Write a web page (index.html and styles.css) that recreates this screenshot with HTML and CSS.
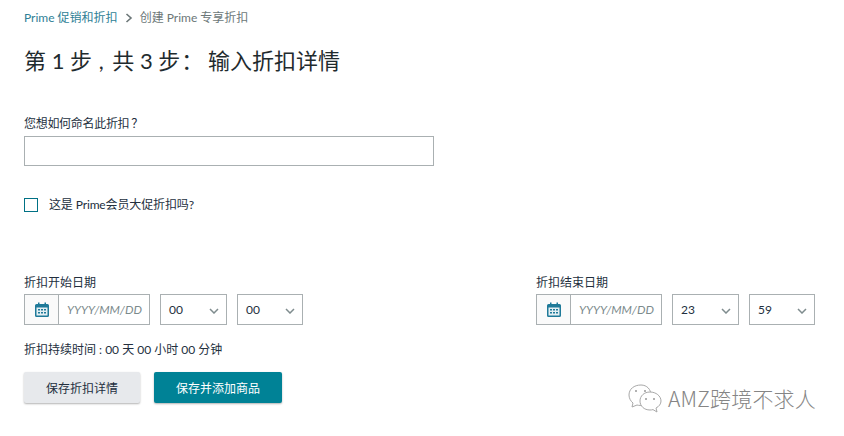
FILE: index.html
```html
<!DOCTYPE html>
<html lang="zh-CN">
<head>
<meta charset="utf-8">
<title>创建 Prime 专享折扣</title>
<link rel="stylesheet" href="styles.css">
</head>
<body>
<main class="page">
  <nav class="crumbs">
    <a class="crumb-link">Prime 促销和折扣</a>
    <svg class="crumb-sep" width="8" height="10" viewBox="0 0 8 10"><path d="M1.500 1l4.500 4-4.500 4" fill="none" stroke="#6c7778" stroke-width="1.600"/></svg>
    <span class="crumb-current">创建 Prime 专享折扣</span>
  </nav>
  <h1 class="title">第 1 步 <span class="comma">,</span> 共 3 步<span class="punct">：</span> 输入折扣详情</h1>
  <label class="label name-label">您想如何命名此折扣<span class="question">？</span></label>
  <input class="name-input" type="text">
  <div class="check-row">
    <span class="checkbox"></span>
    <span class="check-text">这是 Prime会员大促折扣吗?</span>
  </div>
  <div class="dates">
    <section class="date-group">
      <div class="label">折扣开始日期</div>
      <div class="date-fields">
        <div class="date-input">
          <span class="cal"><svg width="14" height="15" viewBox="0 0 14 15"><path d="M1.500 2H3V.5h1.500V2h5V.5H11V2h1.500A1.500 1.500 0 0 1 14 3.500v10a1.500 1.500 0 0 1-1.500 1.500h-11A1.500 1.500 0 0 1 0 13.500v-10A1.500 1.500 0 0 1 1.500 2z" fill="#1f7a99"/><path d="M1.500 5.500h11v8h-11z" fill="#e4eff3"/><path d="M3 7h2v1.500H3zM6 7h2v1.500H6zM9 7h2v1.500H9zM3 10h2v1.500H3zM6 10h2v1.500H6zM9 10h2v1.500H9z" fill="#1f7a99"/></svg></span>
          <span class="placeholder">YYYY/MM/DD</span>
        </div>
        <div class="select s1"><span>00</span><svg width="10" height="6" viewBox="0 0 10 6"><path d="M1 1l4 4 4-4" fill="none" stroke="#7f8c8e" stroke-width="1.500"/></svg></div>
        <div class="select s2"><span>00</span><svg width="10" height="6" viewBox="0 0 10 6"><path d="M1 1l4 4 4-4" fill="none" stroke="#7f8c8e" stroke-width="1.500"/></svg></div>
      </div>
    </section>
    <section class="date-group date-group-end">
      <div class="label">折扣结束日期</div>
      <div class="date-fields">
        <div class="date-input">
          <span class="cal"><svg width="14" height="15" viewBox="0 0 14 15"><path d="M1.500 2H3V.5h1.500V2h5V.5H11V2h1.500A1.500 1.500 0 0 1 14 3.500v10a1.500 1.500 0 0 1-1.500 1.500h-11A1.500 1.500 0 0 1 0 13.500v-10A1.500 1.500 0 0 1 1.500 2z" fill="#1f7a99"/><path d="M1.500 5.500h11v8h-11z" fill="#e4eff3"/><path d="M3 7h2v1.500H3zM6 7h2v1.500H6zM9 7h2v1.500H9zM3 10h2v1.500H3zM6 10h2v1.500H6zM9 10h2v1.500H9z" fill="#1f7a99"/></svg></span>
          <span class="placeholder">YYYY/MM/DD</span>
        </div>
        <div class="select s1"><span>23</span><svg width="10" height="6" viewBox="0 0 10 6"><path d="M1 1l4 4 4-4" fill="none" stroke="#7f8c8e" stroke-width="1.500"/></svg></div>
        <div class="select s2"><span>59</span><svg width="10" height="6" viewBox="0 0 10 6"><path d="M1 1l4 4 4-4" fill="none" stroke="#7f8c8e" stroke-width="1.500"/></svg></div>
      </div>
    </section>
  </div>
  <p class="duration">折扣持续时间 : 00 天 00 小时 00 分钟</p>
  <div class="actions">
    <button class="btn btn-secondary">保存折扣详情</button>
    <button class="btn btn-primary">保存并添加商品</button>
  </div>
  <div class="watermark">
    <svg width="36" height="30" viewBox="0 0 36 30"><g fill="#fff" stroke="#a8a8a8" stroke-width="1"><path d="M14 2C7 2 2 6 2 12c0 3 1.500 6 4 8l-1 4 5-2c1 .3 2 .4 3 .4 6 0 11-5 11-10.400S20 2 14 2z"/><path d="M23 9c-6 0-10 4-10 9s4 9 10 9c1 0 2-.1 3-.4l4 2.400-1-4c3-1.500 5-4 5-7 0-5-5-9-11-9z"/></g><g fill="#999"><circle cx="9" cy="8" r="1"/><circle cx="18" cy="8" r="1"/><circle cx="19" cy="16" r="1"/><circle cx="27" cy="16" r="1"/></g></svg>
    <span>AMZ跨境不求人</span>
  </div>
</main>
</body>
</html>
```
FILE: styles.css
```css
* { box-sizing: border-box; }
html, body { margin: 0; padding: 0; background: #fff; }
body {
  width: 844px;
  height: 436px;
  overflow: hidden;
  font-family: "Lato", "Noto Sans CJK SC", sans-serif;
  font-size: 12px;
  color: #232f3e;
}
.page { position: relative; height: 436px; padding: 10px 24px 0; }
.crumbs { display: flex; align-items: center; height: 16px; line-height: 16px; gap: 7px; }
.crumb-link { color: #2f7f96; }
.crumb-current { color: #6c7778; }
.title { margin: 18px 0 0; height: 33px; font-size: 22px; line-height: 30px; font-weight: 400; color: #1f2b2e; white-space: nowrap; }
.comma { margin: 0 3px 0 1px; }
.punct { font-family: "Noto Sans CJK TC", sans-serif; margin: 0 -1px 0 1px; }
.question { font-family: "Noto Sans CJK TC", sans-serif; margin-left: 2px; }
.label { display: block; line-height: 18px; height: 16px; color: #232f3e; }
.name-label { margin-top: 39px; letter-spacing: -.3px; line-height: 14px; }
.name-input { display: block; margin: 4px 0 0; width: 410px; height: 30px; border: 1px solid #aab0b2; background: #fff; outline: 0; padding: 0 8px; }
.check-row { display: flex; align-items: center; margin-top: 32px; height: 14px; gap: 11px; }
.checkbox { width: 14px; height: 14px; border: 1px solid #007185; background: #fff; }
.check-text { line-height: 14px; height: 14px; letter-spacing: -.13px; }
.dates { display: flex; margin-top: 62px; }
.date-group { flex: 0 0 512px; }
.date-group-end { flex: 0 0 279px; }
.date-fields { display: flex; margin-top: 4px; height: 31px; }
.date-input { display: flex; width: 126px; height: 31px; border: 1px solid #aab0b2; }
.cal { width: 34px; display: flex; align-items: center; justify-content: center; background: #fafafa; border-right: 1px solid #aab0b2; }
.placeholder { flex: 1; padding-left: 8px; line-height: 29px; font-style: italic; color: #7b8a8c; font-size: 12px; white-space: nowrap; }
.select { display: flex; align-items: center; justify-content: space-between; height: 31px; border: 1px solid #aab0b2; padding: 0 7px 0 8px; line-height: 27px; }
.select svg { display: block; margin-top: 2px; }
.s1 { width: 67px; margin-left: 10px; }
.s2 { width: 66px; margin-left: 10px; }
.duration { margin: 16px 0 0; height: 16px; line-height: 18px; }
.actions { display: flex; margin-top: 15px; gap: 14px; }
.btn { height: 31px; border: 0; border-radius: 2px; font: inherit; padding: 0; box-shadow: 0 1px 2px rgba(0,0,0,.3); }
.btn-secondary { width: 116px; background: #e7e9ec; color: #232f3e; }
.btn-primary { width: 128px; background: #008296; color: #fff; }
.watermark { position: absolute; left: 627px; top: 383px; display: flex; align-items: center; gap: 5px; color: #858585; font-size: 21px; line-height: 28px; letter-spacing: .2px; white-space: nowrap; }
.watermark span { font-family: "Noto Sans CJK SC", sans-serif; font-weight: 300; }
```
